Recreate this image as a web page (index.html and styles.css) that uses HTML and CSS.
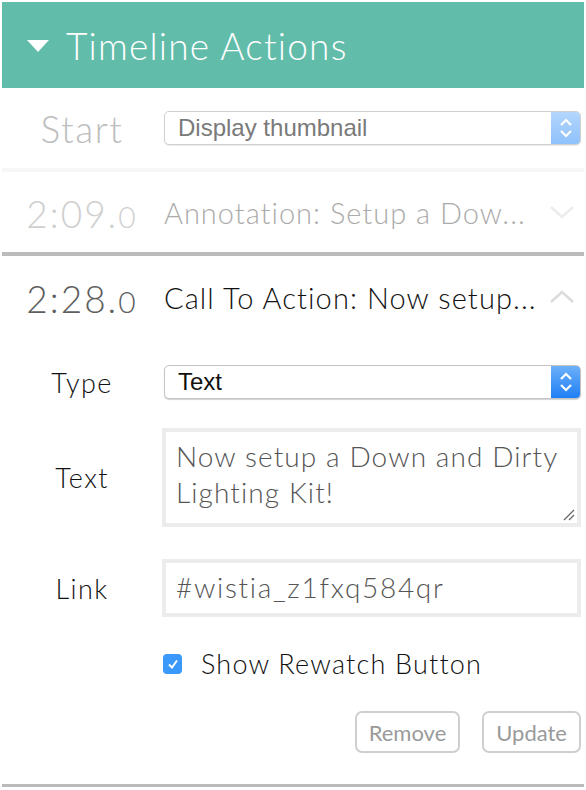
FILE: index.html
```html
<!DOCTYPE html>
<html>
<head>
<meta charset="utf-8">
<link rel="stylesheet" href="styles.css">
</head>
<body>
<div class="panel">
  <div class="header">
    <svg class="caret" width="22" height="12" viewBox="0 0 22 12"><polygon points="0,0 22,0 11,12" fill="#fff"/></svg>
    <span class="header-title">Timeline Actions</span>
  </div>

  <div class="row row-start">
    <div class="col-label label-start">Start</div>
    <div class="select select-disabled">
      <span class="select-text">Display thumbnail</span>
      <span class="stepper">
        <svg width="14" height="20" viewBox="0 0 14 20"><polyline points="2,7 7,2 12,7" fill="none" stroke="#fff" stroke-width="2.2"/><polyline points="2,13 7,18 12,13" fill="none" stroke="#fff" stroke-width="2.2"/></svg>
      </span>
    </div>
  </div>
  <div class="sep-light"></div>

  <div class="row row-item row-collapsed">
    <div class="col-label time"><span class="time-main">2:09.</span><span class="time-tenth">0</span></div>
    <div class="item-title">Annotation: Setup a Dow...</div>
    <svg class="chev" width="26" height="14" viewBox="0 0 26 14"><polyline points="2,2 13,12 24,2" fill="none" stroke="#ececec" stroke-width="2.5"/></svg>
  </div>
  <div class="sep-dark"></div>

  <div class="row row-item row-open">
    <div class="col-label time"><span class="time-main">2:28.</span><span class="time-tenth">0</span></div>
    <div class="item-title">Call To Action: Now setup...</div>
    <svg class="chev" width="26" height="14" viewBox="0 0 26 14"><polyline points="2,12 13,2 24,12" fill="none" stroke="#dcdcdc" stroke-width="2.5"/></svg>
  </div>

  <div class="form">
    <div class="field field-type">
      <div class="col-label flabel">Type</div>
      <div class="select select-active">
        <span class="select-text">Text</span>
        <span class="stepper">
          <svg width="14" height="20" viewBox="0 0 14 20"><polyline points="2,7 7,2 12,7" fill="none" stroke="#fff" stroke-width="2.2"/><polyline points="2,13 7,18 12,13" fill="none" stroke="#fff" stroke-width="2.2"/></svg>
        </span>
      </div>
    </div>

    <div class="field field-text">
      <div class="col-label flabel">Text</div>
      <div class="textbox textarea">
        Now setup a Down and Dirty Lighting Kit!
        <svg class="grip" width="12" height="12" viewBox="0 0 12 12"><line x1="1" y1="11" x2="11" y2="1" stroke="#666" stroke-width="1.3"/><line x1="6" y1="11" x2="11" y2="6" stroke="#666" stroke-width="1.3"/></svg>
      </div>
    </div>

    <div class="field field-link">
      <div class="col-label flabel">Link</div>
      <div class="textbox input">#wistia_z1fxq584qr</div>
    </div>

    <div class="check-row">
      <span class="checkbox">
        <svg width="12" height="12" viewBox="0 0 12 12"><polyline points="2,6.5 5,9.5 10,2.5" fill="none" stroke="#fff" stroke-width="2"/></svg>
      </span>
      <span class="check-label">Show Rewatch Button</span>
    </div>

    <div class="buttons">
      <span class="btn">Remove</span>
      <span class="btn">Update</span>
    </div>
  </div>
  <div class="sep-dark sep-bottom"></div>
</div>
</body>
</html>
```

FILE: styles.css
```css
* { box-sizing: border-box; }
html, body { margin: 0; padding: 0; background: #fff; }
body { font-family: "Lato", "Open Sans", sans-serif; }

.panel {
  margin: 2px;
  width: 582px;
}

.header {
  height: 86px;
  background: #62bcaa;
  display: flex;
  align-items: center;
  padding-left: 25px;
}
.caret { margin-right: 17px; margin-top: 2px; }
.header-title {
  color: #fff;
  font-size: 37px;
  font-weight: 300;
  letter-spacing: 1.2px;
}

.row {
  display: flex;
  align-items: center;
}
.col-label {
  width: 160px;
  flex: none;
  text-align: center;
}
.row-start { height: 80px; }
.label-start {
  color: #bdbdbd;
  font-size: 37px;
  font-weight: 300;
  letter-spacing: 1.5px;
}

.select {
  flex: 1;
  height: 34px;
  margin-left: 2px;
  margin-right: 3px;
  border: 1px solid #d0d0d0;
  border-radius: 5px;
  display: flex;
  align-items: center;
  overflow: hidden;
  background: #fff;
  box-shadow: 0 1px 1px rgba(0,0,0,0.08);
}
.select-text {
  flex: 1;
  padding-left: 13px;
  font-family: "Liberation Sans", Arial, sans-serif;
  font-size: 24px;
}
.select-disabled .select-text { color: #7a7a7a; }
.select-active .select-text { color: #111; }
.select-active { border-color: #c4c4c4; box-shadow: 0 1px 1px rgba(0,0,0,0.18); }
.stepper {
  width: 29px;
  height: 100%;
  display: flex;
  align-items: center;
  justify-content: center;
}
.select-disabled .stepper { background: linear-gradient(#b3d6fd, #8fc1fb); }
.select-active .stepper { background: linear-gradient(#6cb0fa, #1f7ff4); }

.sep-light { height: 4px; background: #f6f6f6; }
.sep-dark { height: 4px; background: #bbbbbb; }

.row-item { height: 80px; }
.row-open { height: 82px; }
.time { font-weight: 300; letter-spacing: 2px; padding-top: 2px; }
.time-main { font-size: 37px; }
.time-tenth { font-size: 30px; }
.row-collapsed .time { color: #cfcfcf; }
.row-open .time { color: #5e5e5e; }
.item-title {
  flex: 1;
  padding-left: 2px;
  font-size: 29px;
  font-weight: 300;
  letter-spacing: 1px;
  white-space: nowrap;
}
.row-collapsed .item-title { color: #ababab; }
.row-open .item-title { color: #111; letter-spacing: 1.1px; }
.chev { margin-right: 9px; flex: none; }

.form { padding-bottom: 31px; }
.field { display: flex; align-items: center; }
.flabel { color: #111; font-size: 27px; font-weight: 300; letter-spacing: 1.4px; }
.field-type { margin-top: 27px; }
.field-type .select { margin-left: 2px; }

.textbox {
  flex: 1;
  margin-right: 3px;
  border: 4px solid #ececec;
  color: #555;
  font-size: 28px;
  font-weight: 300;
  letter-spacing: 1.1px;
  padding: 6px 10px;
  position: relative;
}
.field-text { margin-top: 29px; }
.textarea { height: 99px; line-height: 36px; }
.grip { position: absolute; right: 2px; bottom: 2px; }
.field-link { margin-top: 32px; }
.input { height: 58px; padding-top: 7px; letter-spacing: 1.7px; }

.check-row {
  display: flex;
  align-items: center;
  margin-top: 30px;
  padding-left: 161px;
}
.checkbox {
  width: 19px;
  height: 20px;
  border-radius: 4px;
  background: #3b99fc;
  display: flex;
  align-items: center;
  justify-content: center;
  margin-right: 19px;
}
.check-label { color: #111; font-size: 27px; font-weight: 300; letter-spacing: 1.2px; }

.buttons {
  display: flex;
  justify-content: flex-end;
  gap: 22px;
  margin-top: 31px;
  margin-right: 3px;
}
.btn {
  height: 42px;
  border: 2px solid #cfcfcf;
  border-radius: 7px;
  color: #9a9a9a;
  font-size: 22px;
  display: flex;
  align-items: center;
  padding: 0 12px;
}
.sep-bottom { height: 3px; }
```
